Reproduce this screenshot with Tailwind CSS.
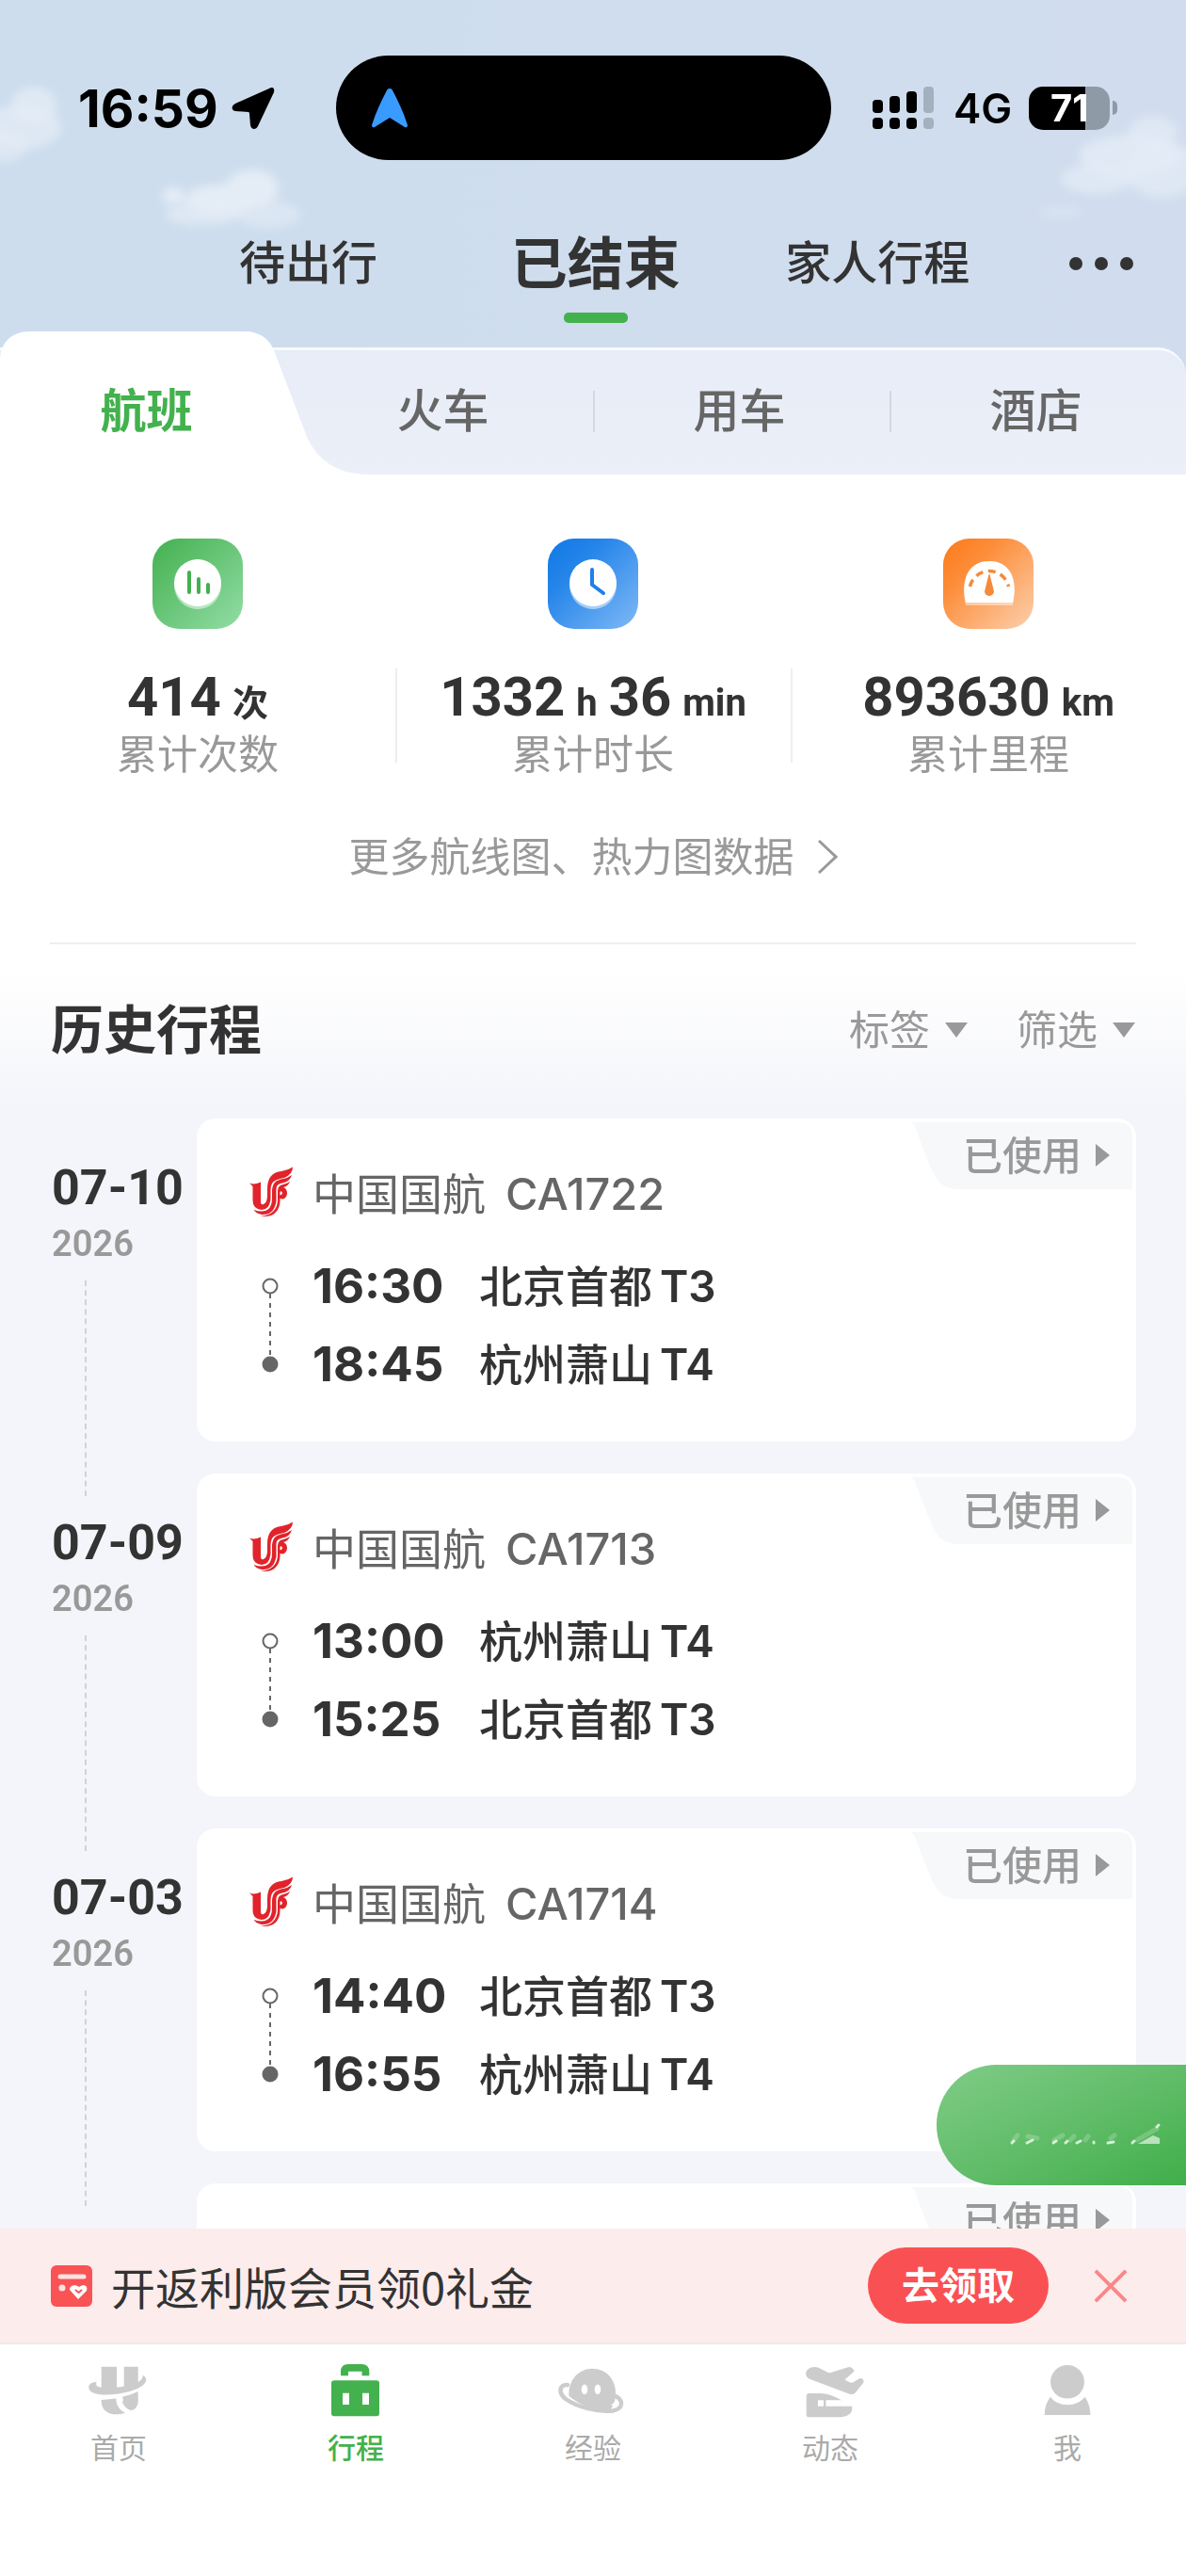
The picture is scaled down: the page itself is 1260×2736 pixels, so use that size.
<!DOCTYPE html>
<html lang="zh-CN">
<head>
  <meta charset="UTF-8" />
  <meta name="viewport" content="width=device-width, initial-scale=1.0" />
  <title>行程</title>
  <script src="https://cdn.jsdelivr.net/npm/@tailwindcss/browser@4"></script>
</head>
<body class="h-screen flex flex-col overflow-hidden bg-white text-[#333] font-['Inter','Noto_Sans_CJK_SC',sans-serif]">

  <!-- Header -->
  <header class="relative shrink-0 bg-gradient-to-r from-[#cddded] to-[#d1ddee]">
    <svg class="absolute left-0 top-0 w-full h-[352px]" viewBox="0 0 1260 352" preserveAspectRatio="none" aria-hidden="true">
      <defs><filter id="soft" x="-20%" y="-20%" width="140%" height="140%"><feGaussianBlur stdDeviation="5" /></filter></defs>
      <g fill="#e4ecf6" filter="url(#soft)">
        <ellipse cx="36" cy="112" rx="24" ry="20" opacity=".8" />
        <ellipse cx="22" cy="135" rx="44" ry="24" opacity=".7" />
        <ellipse cx="0" cy="155" rx="30" ry="18" opacity=".6" />
        <ellipse cx="268" cy="200" rx="28" ry="20" />
        <ellipse cx="235" cy="212" rx="38" ry="16" />
        <ellipse cx="184" cy="208" rx="12" ry="9" />
        <ellipse cx="215" cy="228" rx="40" ry="12" opacity=".7" />
        <ellipse cx="285" cy="228" rx="34" ry="14" opacity=".6" />
        <ellipse cx="1225" cy="140" rx="26" ry="16" opacity=".7" />
        <ellipse cx="1200" cy="165" rx="54" ry="22" opacity=".8" />
        <ellipse cx="1165" cy="190" rx="38" ry="16" opacity=".7" />
        <ellipse cx="1235" cy="180" rx="40" ry="30" opacity=".7" />
        <ellipse cx="1128" cy="225" rx="22" ry="7" opacity=".4" />
      </g>
    </svg>

    <!-- Status bar -->
    <div class="relative h-[170px] pt-[59px] flex items-center text-black">
      <div class="w-[357px] pl-[83px] flex items-center gap-[14px]">
        <span class="text-[55px] leading-[60px] font-bold">16:59</span>
        <svg class="w-[46px] h-[46px]" viewBox="0 0 46 46"><path d="M41 1.500 4 18C0 20-1 25 4 26L18 27Q19 27 19 29L20 41C21 46 26 46 28 42L45 6C46 2 44 0 41 1.500Z" /></svg>
      </div>
      <div class="w-[526px] h-[111px] rounded-full bg-black flex items-center pl-[37px]">
        <svg class="w-[40px] h-[44px]" viewBox="0 0 40 44"><path fill="#3a9bff" d="M17.500 2Q20 0 22.500 2C29 14 35 27 39 40Q39 43 36 42L20 32 4 42Q1 43 1 40C5 27 11 14 17.500 2Z" /></svg>
      </div>
      <div class="flex items-center pl-[44px]">
        <svg class="w-[66px] h-[46px]" viewBox="0 0 66 46">
          <rect x="0" y="14" width="11" height="14" rx="4" /><rect x="18" y="10" width="11" height="18" rx="4" /><rect x="36" y="5" width="11" height="23" rx="4" />
          <rect x="0" y="33" width="11" height="12" rx="4" /><rect x="18" y="33" width="11" height="12" rx="4" /><rect x="36" y="33" width="11" height="12" rx="4" />
          <g fill="#a3b1bf"><rect x="54" y="0" width="11" height="28" rx="4" /><rect x="54" y="33" width="11" height="12" rx="4" /></g>
        </svg>
        <span class="ml-[20px] text-[44px] leading-[60px] font-semibold">4G</span>
        <div class="ml-[18px] h-[46px] w-[86px] rounded-[15px] bg-gradient-to-r from-black from-70% to-[#8f9aa7] to-70% text-white text-[40px] leading-[46px] font-bold text-center">71</div>
        <div class="ml-[3px] h-[15px] w-[5px] rounded-r-full bg-[#8f9aa7]"></div>
      </div>
    </div>

    <!-- Trip state -->
    <nav class="relative h-[182px]">
      <div class="pt-[72px] pl-[254px] pr-[56px] flex items-center justify-between text-[49px] leading-[76px] font-medium whitespace-nowrap">
        <button>待出行</button>
        <button class="relative ml-[76px] text-[60px] font-bold">已结束<span class="absolute left-1/2 -translate-x-1/2 top-[90px] w-[68px] h-[11px] rounded-[5px] bg-[#43b14e]"></span></button>
        <button class="ml-[46px]">家人行程</button>
        <button class="ml-[40px] flex gap-[13px]" aria-label="更多">
          <span class="size-[14px] rounded-full bg-[#333]"></span><span class="size-[14px] rounded-full bg-[#333]"></span><span class="size-[14px] rounded-full bg-[#333]"></span>
        </button>
      </div>
    </nav>

    <!-- Category tabs -->
    <div class="relative h-[152px]">
      <div class="absolute inset-x-0 top-[17px] bottom-0 rounded-tr-[30px] border-t-[3px] border-[#f8fafd] bg-gradient-to-b from-[#e7edf7] to-[#ebeff8]"></div>
      <svg class="absolute left-0 top-0 w-[392px] h-[152px]" viewBox="0 0 392 152"><path fill="#fff" d="M0 32C0 12 12 0 32 0H260C276 0 286 8 291 20L326 112C338 138 360 152 392 152H0Z" /></svg>
      <div class="relative h-full pt-[18px] grid grid-cols-4 items-center text-[49px] leading-[60px] font-medium text-[#666]">
        <button class="pr-[4px] font-bold text-[#43b14e]">航班</button>
        <button class="pr-[4px]">火车</button>
        <button class="pr-[6px] border-l-2 border-[#d3d8e1] leading-[44px]">用车</button>
        <button class="pr-[6px] border-l-2 border-[#d3d8e1] leading-[44px]">酒店</button>
      </div>
    </div>
  </header>

  <main class="relative flex-1 min-h-0 overflow-hidden bg-[#f4f5fa]">
    <!-- Totals -->
    <section class="bg-white pt-[68px]">
      <div class="grid grid-cols-3 text-center">
        <div>
          <svg class="mx-auto size-[96px]" viewBox="0 0 96 96">
            <defs><linearGradient id="g1" x1="0" y1="0" x2="1" y2="1"><stop stop-color="#43b04e" /><stop offset="1" stop-color="#92dda6" /></linearGradient></defs>
            <rect width="96" height="96" rx="28" fill="url(#g1)" />
            <circle cx="48" cy="50" r="25" fill="#fff" opacity=".5" /><circle cx="48" cy="47" r="25" fill="#fff" />
            <path d="M39 36V57M49 43V57M59 49V57" stroke="#43b04e" stroke-width="4" stroke-linecap="round" />
          </svg>
          <div class="mt-[40px] flex justify-center items-baseline gap-[12px] h-[64px] leading-[64px]">
            <span class="text-[58px] font-bold font-[Roboto]">414</span><span class="text-[38px] font-bold">次</span>
          </div>
          <div class="mt-[4px] text-[43px] leading-[50px] text-[#999]">累计次数</div>
        </div>
        <div class="relative">
          <span class="absolute left-0 top-[138px] h-[100px] w-[2px] bg-[#eee]"></span>
          <svg class="mx-auto size-[96px]" viewBox="0 0 96 96">
            <defs><linearGradient id="g2" x1="0" y1="0" x2="1" y2="1"><stop stop-color="#1079e6" /><stop offset=".3" stop-color="#2484e9" /><stop offset="1" stop-color="#7fb9f6" /></linearGradient></defs>
            <rect width="96" height="96" rx="28" fill="url(#g2)" />
            <circle cx="48" cy="50" r="25" fill="#fff" opacity=".5" /><circle cx="48" cy="47" r="25" fill="#fff" />
            <path d="M47 33V49L59 58" fill="none" stroke="#1f80e8" stroke-width="4" stroke-linecap="round" stroke-linejoin="round" />
          </svg>
          <div class="mt-[40px] flex justify-center items-baseline gap-[12px] h-[64px] leading-[64px] font-[Roboto] text-[40px] font-bold">
            <span class="text-[58px]">1332</span><span>h</span><span class="text-[58px]">36</span><span>min</span>
          </div>
          <div class="mt-[4px] text-[43px] leading-[50px] text-[#999]">累计时长</div>
        </div>
        <div class="relative">
          <span class="absolute left-0 top-[138px] h-[100px] w-[2px] bg-[#eee]"></span>
          <svg class="mx-auto size-[96px]" viewBox="0 0 96 96">
            <defs><linearGradient id="g3" x1="0" y1="0" x2="1" y2="1"><stop stop-color="#fb7a1a" /><stop offset=".3" stop-color="#fd8c38" /><stop offset="1" stop-color="#fcd0ae" /></linearGradient></defs>
            <rect width="96" height="96" rx="28" fill="url(#g3)" />
            <path d="M24 71C18 45 26 24 49 24S79 45 74 71Z" fill="#fff" opacity=".45" />
            <path d="M24 68C18 42 28 24 49 24S80 42 74 68Z" fill="#fff" />
            <path d="M28.500 51A21 21 0 0 1 69.500 51" fill="none" stroke="#f58a3c" stroke-width="3.500" stroke-dasharray="8 5.500" />
            <path d="M48.500 38H49.500L54 56A5 5 0 1 1 44 56Z" fill="#f58a3c" />
          </svg>
          <div class="mt-[40px] flex justify-center items-baseline gap-[12px] h-[64px] leading-[64px] font-[Roboto] text-[40px] font-bold">
            <span class="text-[58px]">893630</span><span>km</span>
          </div>
          <div class="mt-[4px] text-[43px] leading-[50px] text-[#999]">累计里程</div>
        </div>
      </div>

      <a href="#" class="mt-[59px] flex justify-center items-center gap-[24px] text-[43px] leading-[50px] text-[#999]">
        <span>更多航线图、热力图数据</span>
        <svg class="w-[22px] h-[38px]" viewBox="0 0 22 38" fill="none" stroke="#999" stroke-width="3"><path d="M2 2 20 19 2 36" /></svg>
      </a>
      <hr class="mt-[66px] mx-[53px] border-0 h-[2px] bg-[#eee]" />
    </section>

    <!-- History title and filters -->
    <div class="px-[54px] pt-[61px] pb-[64px] flex items-center justify-between bg-gradient-to-b from-white from-15% to-[#f4f5fa] to-95%">
      <h2 class="text-[56px] leading-[60px] font-bold">历史行程</h2>
      <div class="flex gap-[52px] text-[43px] leading-[50px] text-[#999]">
        <button class="flex items-center gap-[16px]">标签<svg class="w-[24px] h-[16px]" viewBox="0 0 24 16"><path fill="#999" d="M0 0H24L12 16Z" /></svg></button>
        <button class="flex items-center gap-[16px]">筛选<svg class="w-[24px] h-[16px]" viewBox="0 0 24 16"><path fill="#999" d="M0 0H24L12 16Z" /></svg></button>
      </div>
    </div>

    <ul id="trips" class="px-[53px]"></ul>

    <!-- Floating pill, half slid out -->
    <button class="absolute right-0 bottom-[46px] w-[265px] h-[128px] rounded-l-full bg-gradient-to-br from-[#80cc87] to-[#3fae4a]" aria-label="添加行程">
      <svg class="absolute left-0 top-0 w-[265px] h-[128px]" viewBox="0 0 265 128" fill="none" stroke="#fff" stroke-linecap="round">
        <g opacity=".2" stroke-width="5"><path d="M82 80 86 75M97 76 107 78M125 80 134 75M142 80 146 76M158 80 161 76M185 78 189 75M213 80 234 68" /></g>
        <g opacity=".75" stroke-width="3"><path d="M80 83 82 81M96 83 102 80M124 83 127 81M137 83 139 81M149 83 153 81M167 83V82M182 83 188 82M208 83 210 81M234 66 236 64" /></g>
        <path d="M214 84H237V78L230 75Z" fill="#fff" stroke="none" opacity=".6" />
      </svg>
    </button>
  </main>

  <!-- Promo strip -->
  <div class="shrink-0 h-[123px] pl-[54px] pr-[62px] flex items-center bg-[#fceceb] border-b-2 border-[#f1e8e8]">
    <svg class="w-[44px] h-[44px]" viewBox="0 0 44 44">
      <rect width="44" height="44" rx="6" fill="#f95355" />
      <path d="M10 12H35" stroke="#fde3e1" stroke-width="5" stroke-linecap="round" /><circle cx="12" cy="24" r="3.500" fill="#fde3e1" />
      <path d="M29 36 20 26C20 21 26 20 30 23 34 20 40 21 38 27Z" fill="#fff" /><path d="M26 26 29.500 29 33 26" fill="none" stroke="#f95355" stroke-width="2" />
    </svg>
    <span class="ml-[20px] text-[47px] leading-[60px] font-['Noto_Sans_CJK_SC',sans-serif]">开返利版会员领0礼金</span>
    <button class="ml-auto w-[192px] h-[81px] rounded-full bg-[#f95153] text-white text-[40px] leading-[60px] font-bold">去领取</button>
    <button class="ml-[48px]" aria-label="关闭"><svg class="size-[36px]" viewBox="0 0 38 38" stroke="#fa8787" stroke-width="4"><path d="M2 2 36 36M36 2 2 36" /></svg></button>
  </div>

  <!-- Bottom tab bar -->
  <nav class="shrink-0 h-[246px] pt-[18px] grid grid-cols-5 content-start text-center text-[30px] leading-[40px] text-[#aaa]">
    <a href="#" class="flex flex-col items-center gap-[12px]">
      <svg class="w-[80px] h-[60px]" viewBox="0 0 80 60" fill="#ccc">
        <path d="M21.700 5.700H38V27.500Q42 27.500 45.700 26.500V5.700H60.700V22Q66 19 65.700 14.700C72 18 70 24 60 29C48 34 34 36 23 35.500C12 35 8 31 8.300 27C9 23 13 22 16.700 22C15 25 17 27.500 21.700 27.700Z" />
        <path d="M21.700 41 37.500 39.500C37 46 41 52 47 54.700C40 57 32 57 28 54C23 51 21.500 46 21.700 41Z" />
        <path d="M44 37.700Q53 36 60.700 32V42C60.700 48 57 52 53.300 52C48 51 45 46 44 43.500L45 41Z" />
      </svg>
      <span>首页</span>
    </a>
    <a href="#" class="flex flex-col items-center gap-[12px] text-[#43b14e]">
      <svg class="w-[80px] h-[60px]" viewBox="0 0 80 60" fill="#43b14e">
        <path d="M24 15.300V11Q24 3 32 3H46Q54.300 3 54.300 11V15.300H46.500V10.700H32V15.300Z" />
        <rect x="14" y="20.300" width="51" height="38" rx="3" />
        <path fill="#fff" d="M26 33.700H33V46H26ZM47 33.700H54V46H47Z" />
      </svg>
      <span class="font-medium">行程</span>
    </a>
    <a href="#" class="flex flex-col items-center gap-[12px]">
      <svg class="w-[80px] h-[60px]" viewBox="0 0 80 60" fill="#ccc">
        <path d="M14.500 37C13 20 25 7.700 39.400 7.700S64 19 64 34C64 43 61 49 57 53C42 53 27 47 14.500 37Z" />
        <path d="M13 25C4 24 3 34 11 40C24 49 45 54 61 52.500C73 50 72 41 64 37" fill="none" stroke="#ccc" stroke-width="4.500" stroke-linecap="round" />
        <path fill="#fff" d="M64.500 41.500Q68 44 67 47H59Q62 44 64.500 41.500ZM9 31Q10 28 13 28L14 36Q9 34 9 31Z" />
        <ellipse cx="31" cy="29.700" rx="3.300" ry="5.300" fill="#fff" /><ellipse cx="45" cy="29.700" rx="3.300" ry="5.300" fill="#fff" />
      </svg>
      <span>经验</span>
    </a>
    <a href="#" class="flex flex-col items-center gap-[12px]">
      <svg class="w-[80px] h-[60px]" viewBox="0 0 80 60" fill="#ccc">
        <path d="M18 18.700C11 15 14 6 24 6Q27 6 30 8L38 12Q40 12.500 42 11.500L59 6.300Q61 5.500 63 7L65 9Q66 10 65 11L55.500 19.500 60 22Q63 23.500 65 22L71 18.300Q73 17.500 75 19.500 76 21 75 23L67 33Q65 36 60 34.500Z" />
        <path d="M14.700 37Q14.700 34 18 34H30C38 34 46 38 52 41.300H35.500V47.700H63.300V50C63 57 56 59.300 48.600 59.300H18Q14.700 59.300 14.700 57Z" />
        <path fill="#fff" d="M27 41.300H33V47.700H27Z" />
      </svg>
      <span>动态</span>
    </a>
    <a href="#" class="flex flex-col items-center gap-[12px]">
      <svg class="w-[80px] h-[60px]" viewBox="0 0 80 60" fill="#ccc">
        <ellipse cx="40" cy="21.800" rx="18" ry="17.800" />
        <path d="M22 37.700C30 49 50 49 58.600 37.700Q64.400 46 64.400 57H15.800Q15.500 46 22 37.700Z" />
      </svg>
      <span>我</span>
    </a>
  </nav>

  <script>
    const trips = [
      { date: "07-10", year: "2026", no: "CA1722", dep: ["16:30", "北京首都", "T3"], arr: ["18:45", "杭州萧山", "T4"] },
      { date: "07-09", year: "2026", no: "CA1713", dep: ["13:00", "杭州萧山", "T4"], arr: ["15:25", "北京首都", "T3"] },
      { date: "07-03", year: "2026", no: "CA1714", dep: ["14:40", "北京首都", "T3"], arr: ["16:55", "杭州萧山", "T4"] },
      { date: "", year: "", no: "", dep: ["", "", ""], arr: ["", "", ""] }
    ];

    const stop = ([time, city, terminal]) => `
      <div class="h-[83px] flex items-center">
        <span class="w-[177px] text-[51px] font-bold">${time}</span>
        <span class="text-[46px] font-medium">${city}</span>
        <span class="ml-[8px] text-[46px] font-semibold">${terminal}</span>
      </div>`;

    document.getElementById("trips").innerHTML = trips.map(t => `
      <li class="flex">
        <div class="w-[156px] shrink-0 pt-[44px] flex flex-col font-[Roboto]">
          <span class="pl-[2px] text-[52px] leading-[60px] font-bold">${t.date}</span>
          <span class="pl-[2px] text-[38px] leading-[58px] font-semibold text-[#999]">${t.year}</span>
          ${t.date ? `<span class="ml-[37px] mt-[10px] -mb-[24px] flex-1 border-l-2 border-dashed border-[#d0d2d6]"></span>` : ""}
        </div>
        <article class="relative flex-1 mb-[34px] h-[343px] pt-[45px] pl-[46px] rounded-[20px] bg-white">
          ${t.date ? `
          <div class="h-[70px] flex items-center text-[46px] text-[#666]">
            <svg class="size-[70px]" viewBox="0 0 70 70">
              <g fill="#e1232b">
                <path d="M10 23.500Q15 26 22 22.500V43Q22 47 25 46Q29 44 29 37V30C29 17 35 12 44 11Q51 10 56 6.500Q56 14 47 18C36 20 32.500 22 32.500 32V41Q31 52 23 52Q13.500 51 13.500 42V27Z" />
                <path d="M55 15Q53 22 45 23.500C38 25 38.500 28 38.500 34V43Q36 58 23 57Q17 56 14.500 52Q33 58 34 41V31C35 23 38 20.500 46 19Q51 18 55 15Z" />
                <path d="M53 22Q51 27 46 28C52 30 51 40 45 40.500Q40 40 41 35Q44 38 45 34Q44 31 42.500 33V43C42 55 33 61 22 58.500Q38 58 40 43V32Q40 26 46 25Q50 24 53 22Z" />
              </g>
            </svg>
            <span class="ml-[7px]">中国国航</span><span class="ml-[21px] text-[47px] font-medium">${t.no}</span>
          </div>
          <div class="mt-[22px] flex">
            <svg class="w-[70px] h-[166px]" viewBox="0 0 70 166" fill="none">
              <circle cx="32" cy="41" r="7.500" stroke="#666" stroke-width="2" />
              <path d="M32 49V116" stroke="#666" stroke-width="2" stroke-dasharray="5 5" />
              <circle cx="32" cy="124" r="8.500" fill="#666" />
            </svg>
            <div class="ml-[7px]">${stop(t.dep)}${stop(t.arr)}</div>
          </div>` : ""}
          <button class="absolute right-0 top-0 w-[239px] h-[78px] pl-[55px] flex items-center gap-[15px] text-[42px] font-medium text-[#999]">
            <svg class="absolute left-0 top-0 w-[239px] h-[78px]" viewBox="0 0 239 78"><path fill="#f7f8fa" d="M0 4H220Q235 4 235 19V75H50C35 75 28 68 22 55L8 20C5 10 3 6 0 4Z" /></svg>
            <span class="relative">已使用</span>
            <svg class="relative w-[15px] h-[24px]" viewBox="0 0 15 24"><path fill="#999" d="M0 0 15 12 0 24Z" /></svg>
          </button>
        </article>
      </li>`).join("");
  </script>
</body>
</html>
